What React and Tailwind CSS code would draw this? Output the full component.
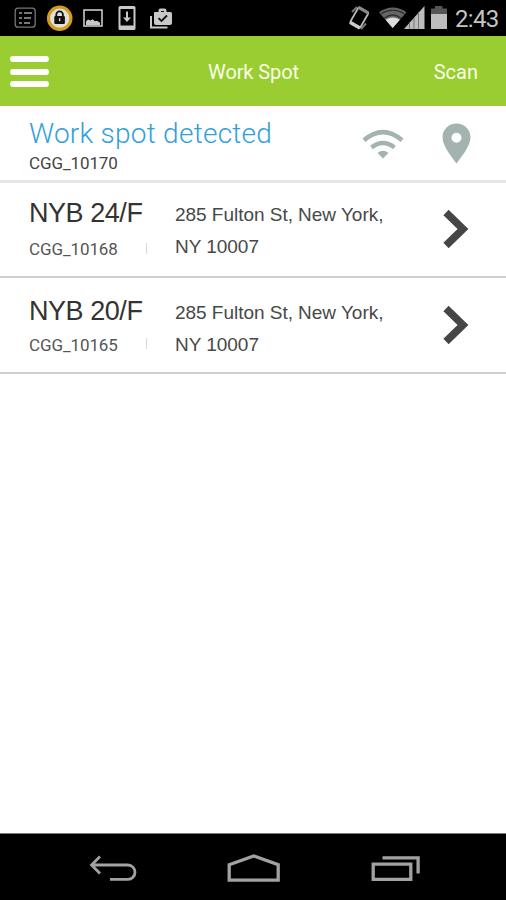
const spots = [
  { name: 'NYB 24/F', code: 'CGG_10168', street: '285 Fulton St, New York,', city: 'NY 10007' },
  { name: 'NYB 20/F', code: 'CGG_10165', street: '285 Fulton St, New York,', city: 'NY 10007' },
];

function StatusBar() {
  return (
    <div className="flex h-9 shrink-0 items-center justify-between bg-black pl-[14px] pr-[7px]">
      <div className="flex h-9 items-center">
        <svg width="22" height="36" viewBox="14 0 22 36" fill="none" stroke="#777" strokeWidth="1.3">
          <rect x="15.2" y="8.2" width="20" height="19" rx="3" />
          <path d="M19 13h3M19 18h3M19 23h3M24 13h8M24 18h7M24 23h6" strokeWidth="1.8" />
        </svg>
        <svg className="ml-[10px]" width="28" height="36" viewBox="46 0 28 36">
          <circle cx="59.7" cy="18.2" r="11.2" fill="#e2e0dc" stroke="#d39c20" strokeWidth="3.2" />
          <path d="M56.3 17v-2.3a3.3 3.3 0 0 1 6.6 0V17" fill="none" stroke="#111" strokeWidth="1.8" />
          <rect x="54.3" y="16" width="10.6" height="8" rx="1" fill="#111" />
          <path d="M59.6 18.2v3" stroke="#ddd" strokeWidth="1.3" />
        </svg>
        <svg className="ml-[8px]" width="22" height="36" viewBox="82 0 22 36">
          <rect x="84" y="10" width="18" height="16" fill="none" stroke="#c8c8c8" strokeWidth="1.6" />
          <path d="M86 25v-3.500l2-2 2.500 1 2-1.300 2.500 2 2-.5 3 2V25z" fill="#c8c8c8" />
        </svg>
        <svg className="ml-[14px]" width="18" height="36" viewBox="118 0 18 36">
          <path fillRule="evenodd" fill="#c8c8c8" d="M120 6h14q1.5 0 1.5 1.5v21q0 1.5-1.5 1.5h-14q-1.5 0-1.5-1.5v-21Q118.500 6 120 6zM120.500 9v16.500h13V9z" />
          <path d="M126 11.500h2v6h3l-4 4.500-4-4.500h3z" fill="#c8c8c8" />
        </svg>
        <svg className="ml-[13px]" width="25" height="36" viewBox="149 0 25 36">
          <path d="M151 16v11.500h16.500" fill="none" stroke="#c8c8c8" strokeWidth="2" />
          <path d="M154.500 12h4v-1.500a2 2 0 0 1 2-2h4a2 2 0 0 1 2 2V12h4a1.500 1.500 0 0 1 1.500 1.500V23a2 2 0 0 1-2 2h-14a2 2 0 0 1-2-2v-9.500a1.500 1.500 0 0 1 .5-1.500z" fill="#c8c8c8" />
          <path d="M161 12v-1h3v1z" fill="#111" />
          <path d="M158.500 18.200l3 2.800 5.500-5.500" fill="none" stroke="#111" strokeWidth="1.8" />
        </svg>
      </div>
      <div className="flex h-9 items-center">
        <svg width="24" height="36" viewBox="347 0 24 36">
          <g transform="rotate(30 359 18)">
            <rect x="353.300" y="8.500" width="11.500" height="18" rx="1.500" fill="none" stroke="#bbb" strokeWidth="1.700" />
            <path d="M353.300 24.500h11.500V28h-11.500z" fill="#ccc" />
            <path d="M353.300 7.500h11.500v3h-11.500z" fill="#888" />
          </g>
          <path d="M352 12l5-5M366 23.500l-5 5.500" stroke="#777" strokeWidth="2" />
        </svg>
        <svg className="ml-[7px]" width="48" height="36" viewBox="378 0 48 36">
          <path d="M392.700 28L379 12.200Q392.700 3 406.500 12.200z" fill="#666" />
          <path d="M381 13.800Q392.700 6.500 404.500 13.800M384.500 18Q392.700 12 401 18" fill="none" stroke="#303030" strokeWidth="1.300" />
          <path d="M392.700 28l-7.200-8.200q7.200-4.500 14.400 0z" fill="#ddd" />
          <path d="M404 29L424.500 6v23z" fill="#bdbdbd" />
          <path d="M409.500 22v7M414 18v11M418.500 12v17" stroke="#757575" strokeWidth="1" />
        </svg>
        <svg className="ml-[4px]" width="18" height="36" viewBox="430 0 18 36">
          <path d="M435 6h7.500v2.500h4.500V14h-16V8.500h4z" fill="#555" />
          <path d="M431 14h16v15h-16z" fill="#bdbdbd" />
        </svg>
        <span className="ml-[7px] w-[44px] whitespace-nowrap pt-px text-[24px] leading-9 tracking-[-0.7px] text-[#c4c4c4]">2:43</span>
      </div>
    </div>
  );
}

function Header() {
  return (
    <header className="grid h-[70px] shrink-0 grid-cols-[1fr_auto_1fr] items-center bg-[#9acd31] pr-[28px] pl-[10px] text-[20px] text-[#f8ffe8]">
      <button className="flex w-[39px] flex-col gap-[6.500px] pt-px">
        <span className="h-[6px] w-full rounded-full bg-white" />
        <span className="h-[6px] w-full rounded-full bg-white" />
        <span className="h-[6px] w-full rounded-full bg-white" />
      </button>
      <h1 className="pl-[19px] pt-px tracking-[-0.1px]">Work Spot</h1>
      <button className="justify-self-end pt-px">Scan</button>
    </header>
  );
}

function DetectedRow() {
  return (
    <section className="flex h-[77px] shrink-0 justify-between border-b-3 border-[#e6e6e6] pl-[29px] pr-[35px]">
      <div className="pt-[11px]">
        <h2 className="text-[28px] leading-[34px] font-light tracking-[0.25px] text-[#329fda]">Work spot detected</h2>
        <p className="text-[17px] leading-[24px] tracking-[-0.1px] text-[#444]">CGG_10170</p>
      </div>
      <div className="flex items-start">
        <svg className="mt-[22px]" width="42" height="32" viewBox="0 0 42 32" fill="none" stroke="#a3b3b0" strokeWidth="4.500">
          <path d="M2 12.200Q21-4 40 12.200" />
          <path d="M9.500 19.500Q21 10.500 32.500 19.500" />
          <path d="M21 30.500l-5.500-5.600q5.500-4.200 11 0z" fill="#a3b3b0" stroke="none" />
        </svg>
        <svg className="ml-[38px] mt-[17px]" width="29" height="41" viewBox="0 0 29 41">
          <path fillRule="evenodd" fill="#a3b3b0" d="M14.500.5C6.800.5.5 6.500.5 14.300c0 9 9.500 20 14 26.200 4.500-6.200 14-17.200 14-26.200C28.500 6.500 22.200.5 14.500.5zm0 9.300a5 5 0 1 1 0 10 5 5 0 0 1 0-10z" />
        </svg>
      </div>
    </section>
  );
}

function SpotRow({ spot }) {
  return (
    <li className="group flex h-24 border-b-2 border-[#cfcfcf] pl-[29px] pr-[37px] first:h-[95px]">
      <div className="w-[117px] pt-[15px] group-first:pt-[12px]">
        <h3 className="font-['Liberation_Sans'] text-[27px] leading-[36px] tracking-[-0.45px] whitespace-nowrap text-[#333]">{spot.name}</h3>
        <p className="text-[17px] leading-[32px] tracking-[-0.1px] text-[#555] group-first:leading-[36px]">{spot.code}</p>
      </div>
      <div className="mt-[60px] h-[11px] w-px bg-[#d8d8d8]" />
      <div className="ml-[28px] flex-1 pt-[19px] font-['Liberation_Sans'] text-[19px] leading-8 tracking-[-0.03px] whitespace-nowrap text-[#484848] group-first:pt-[16px]">
        <p>{spot.street}</p>
        <p>{spot.city}</p>
      </div>
      <svg className="mt-[27px] group-first:mt-[26px]" width="26" height="40" viewBox="0 0 26 40" fill="none" stroke="#464646" strokeWidth="7.500">
        <path d="M3 3.500L20 20 3 36.500" />
      </svg>
    </li>
  );
}

function NavBar() {
  return (
    <nav className="flex h-[67px] shrink-0 border-t border-[#777] bg-black pl-[89px]">
      <svg className="mt-[21px]" width="48" height="28" viewBox="0 0 48 28" fill="none" stroke="#a2a2a2" strokeWidth="2.800">
        <path d="M11 1.500L2.500 10 11 18.500M3 10h36a7 7.200 0 0 1 0 14.400H21" />
      </svg>
      <svg className="ml-[89px] mt-[19px]" width="56" height="30" viewBox="0 0 56 30" fill="none" stroke="#a2a2a2" strokeWidth="3.300">
        <path d="M3.200 11.700L27.700 3l24.500 8.700v15.500h-49z" />
      </svg>
      <svg className="ml-[89px] mt-[21px]" width="50" height="28" viewBox="0 0 50 28" fill="none" stroke="#a2a2a2" strokeWidth="3.300">
        <path d="M2.200 9.200h37.600V24.400H2.200zM11.500 2.800h35.600V18.500" />
      </svg>
    </nav>
  );
}

export default function App() {
  return (
    <div className="flex h-[900px] w-[506px] flex-col overflow-hidden bg-white font-['Roboto',sans-serif]">
      <StatusBar />
      <Header />
      <main className="flex-1">
        <DetectedRow />
        <ul>
          {spots.map((spot) => (
            <SpotRow key={spot.code} spot={spot} />
          ))}
        </ul>
      </main>
      <NavBar />
    </div>
  );
}
